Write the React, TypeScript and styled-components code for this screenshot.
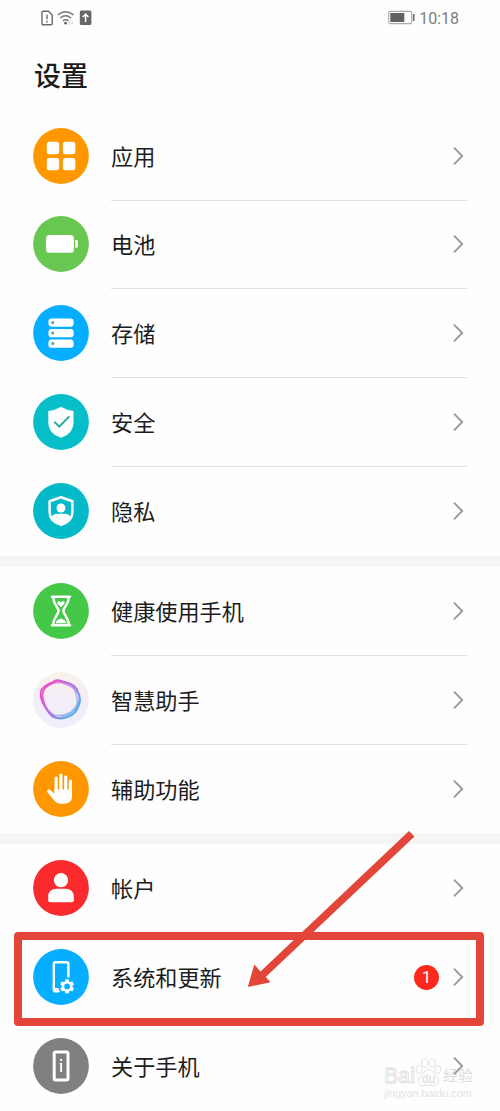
import React from "react";
import styled, { createGlobalStyle } from "styled-components";

const GlobalStyle = createGlobalStyle`
  * { box-sizing: border-box; }
  body {
    margin: 0;
    background: #fefefe;
    font-family: "Noto Sans CJK SC", "Noto Sans", sans-serif;
    color: #1c1c1c;
  }
`;

const Screen = styled.main`
  position: relative;
  display: flex;
  flex-direction: column;
  width: 500px;
  height: 1111px;
  overflow: hidden;
`;

const StatusBar = styled.header`
  display: flex;
  align-items: center;
  justify-content: space-between;
  height: 36px;
  padding: 0 41px;
`;

const StatusGroup = styled.div<{ $gap: number }>`
  display: flex;
  align-items: center;
  gap: ${(p) => p.$gap}px;
`;

const Clock = styled.time`
  font: 400 16px/20px Roboto, sans-serif;
  color: #7c7c7c;
  padding-top: 2px;
`;

const Title = styled.h1`
  margin: 0;
  height: 76.2px;
  padding: 19px 0 0 34px;
  font-size: 27px;
  line-height: 40px;
  font-weight: 500;
`;

const Group = styled.section`
  & + & {
    border-top: 11px solid #f5f5f5;
  }
`;

const Row = styled.div`
  display: flex;
  height: 88.85px;
  padding: 0 33px;
`;

const IconSlot = styled.div`
  display: flex;
  align-items: center;
  width: 78px;
  padding-bottom: 1px;
`;

const RowBody = styled.div<{ $divided: boolean }>`
  flex: 1;
  display: flex;
  align-items: center;
  justify-content: space-between;
  border-bottom: 1px solid ${(p) => (p.$divided ? "#e0e0e0" : "transparent")};
`;

const Label = styled.span`
  font-size: 22.15px;
  line-height: 32px;
  padding-bottom: 2px;
  white-space: nowrap;
`;

const Trailing = styled.div`
  display: flex;
  align-items: center;
  gap: 14px;
  padding-right: 3px;
`;

const Badge = styled.span`
  display: flex;
  align-items: center;
  justify-content: center;
  width: 25px;
  height: 25px;
  border-radius: 50%;
  background: #fb2a1c;
  color: #fff;
  font: 400 17px/25px Roboto, sans-serif;
`;

const Highlight = styled.div`
  position: absolute;
  left: 14px;
  top: 932px;
  width: 470px;
  height: 94px;
  border: 8px solid #e34538;
  border-radius: 4px;
`;

const Pointer = styled.svg`
  position: absolute;
  left: 240px;
  top: 824px;
`;

const Watermark = styled.div`
  position: absolute;
  z-index: -1;
  left: 384px;
  top: 1055px;
  width: 92px;
  color: #fff;
`;

const Brand = styled.div`
  display: flex;
  align-items: flex-end;
  height: 32px;
  font: 400 21.5px/22px "Liberation Sans", sans-serif;
  -webkit-text-stroke: 0.8px #dcdcdc;
`;

const BrandChinese = styled.span`
  font: 400 15px/20px "Noto Sans CJK SC", sans-serif;
  margin: 0 0 2px;
  color: #dcdcdc;
  -webkit-text-stroke: 0;
`;

const Paw = styled.svg`
  margin: 0 1px 0 0;
`;

const Site = styled.div`
  font: 400 10.9px/13px "Liberation Sans", sans-serif;
  color: #e2e2e2;
`;

const Chevron = () => (
  <svg width="11" height="20" viewBox="0 0 11 20" fill="none" stroke="#9a9a9a" strokeWidth="1.9">
    <path d="M1 1.6 9.2 10 1 18.4" />
  </svg>
);

const Disc = ({ color, children }: { color: string; children: React.ReactNode }) => (
  <svg width="56" height="56" viewBox="0 0 56 56">
    <circle cx="28" cy="28" r="27.9" fill={color} />
    {children}
  </svg>
);

const Apps = () => (
  <Disc color="#ff9800">
    <g fill="#fff">
      {[13.8, 29.9].map((x) =>
        [13.8, 29.9].map((y) => <rect key={`${x}-${y}`} x={x} y={y} width="12.4" height="12.4" rx="2.5" />)
      )}
    </g>
  </Disc>
);

const Battery = () => (
  <Disc color="#68c751">
    <rect x="13" y="19" width="28" height="17.7" rx="3.5" fill="#fff" />
    <path d="M42.2 24h1.3q1.3 0 1.3 1.3v5.2q0 1.3-1.3 1.3H42.2z" fill="#fff" />
  </Disc>
);

const Storage = () => (
  <Disc color="#05aeff">
    {[13.4, 24, 34.5].map((y) => (
      <g key={y}>
        <rect x="15.4" y={y} width="25.3" height="8.3" rx="3.4" fill="#fff" />
        <circle cx="19.8" cy={y + 4.1} r="1.5" fill="#4a9fc0" />
      </g>
    ))}
  </Disc>
);

const Security = () => (
  <Disc color="#05bec8">
    <path d="M28 12.7Q34 16.3 40.5 17V28Q40.5 39.5 28 43.7 15.3 39.5 15.3 28V17Q22 16.3 28 12.7Z" fill="#fff" />
    <path d="M21.3 27.8 26.2 32.6 36.3 22.4" fill="none" stroke="#26aa9c" strokeWidth="2" />
  </Disc>
);

const Privacy = () => (
  <Disc color="#05bac8">
    <path d="M28 14.3 39.4 18.2V29Q39.4 38.2 28 41.8 16.6 38.2 16.6 29V18.2Z" fill="none" stroke="#fff" strokeWidth="2.5" strokeLinejoin="round" />
    <circle cx="28" cy="25" r="4.5" fill="#fff" />
    <path d="M18.5 34.2Q20 30.9 24 30.7H32Q36 30.9 37.5 34.2 34 40 28 42 22 40 18.5 34.2Z" fill="#fff" />
  </Disc>
);

const Hourglass = () => (
  <Disc color="#45c747">
    <path d="M20.3 14.5C20.3 22 25.6 24.2 25.6 28S20.3 34 20.3 41.5M35.7 14.5C35.7 22 30.4 24.2 30.4 28S35.7 34 35.7 41.5M19 13.8H37M19 42.2H37" fill="none" stroke="#fff" strokeWidth="2.5" strokeLinecap="round" />
    <path d="M28 24.2 24.5 20.7Q23.7 18.5 25.4 18.2 27.2 18 28 19.4 28.8 18 30.6 18.2 32.3 18.5 31.5 20.7Z" fill="#fff" />
    <path d="M22.7 40.3Q23.2 37 25.8 36.8 28 34 30.2 36.8 32.8 37 33.3 40.3Z" fill="#fff" />
  </Disc>
);

const Assistant = () => (
  <svg width="56" height="56" viewBox="0 0 56 56">
    <defs>
      <linearGradient id="haloFill" x1="0" y1="0" x2="0" y2="1">
        <stop offset="0" stopColor="#f8f2ec" />
        <stop offset="0.5" stopColor="#f4ecf6" />
        <stop offset="1" stopColor="#eef0fc" />
      </linearGradient>
      <linearGradient id="ringStroke" gradientUnits="userSpaceOnUse" x1="12" y1="16" x2="43" y2="42">
        <stop offset="0" stopColor="#ed47c5" />
        <stop offset="0.5" stopColor="#a56ee8" />
        <stop offset="1" stopColor="#49b5e8" />
      </linearGradient>
    </defs>
    <circle cx="28" cy="28" r="28" fill="url(#haloFill)" />
    <g fill="none" stroke="url(#ringStroke)" strokeWidth="1.7" strokeLinejoin="round">
      <path d="M22 8.6C26 7 29 9.5 34 10.5 40 12 43 14 44.5 19 47 24 48.5 28 46 33 44.5 38 41 43 35 45 30 47 24 47 20 44 16 42 14 38 11 33 8.5 29 6.5 25 8 19 10 13 17 12 22 8.6Z" />
      <path d="M21 10.5C26 7.5 31 10.5 35 11.5 41 14 43.5 17 46 23 48 29 44 34 42 38 38 43 32 45 26 46 20 47 17 43 14 38 11 34 11 29 9.5 24 9 16 15 14 21 10.5Z" opacity=".75" />
      <path d="M19 11.5C25 9 32 11.5 37 14 42 16 43 21 44 26 46 31 43 36 38 40 33 43 27 44.5 21 43 16 40 13 36 11 31 8 27 9 21 11 17 13 13 15 13 19 11.5Z" opacity=".6" />
    </g>
  </svg>
);

const Hand = () => (
  <Disc color="#ff9800">
    <g stroke="#fff" strokeWidth="3.2" strokeLinecap="round">
      <path d="M23.1 17V32M27.9 14V32M32.7 15.8V32M37.4 20V34" />
    </g>
    <path d="M21.5 28.5H39V36Q38.5 42.8 31 42.8H28Q23.5 42.8 20.5 38.5L14.4 31.2Q13.4 29.6 15 28.7 16.3 28.2 17.5 29.2L21.5 32.8Z" fill="#fff" />
  </Disc>
);

const Account = () => (
  <Disc color="#fa2a2d">
    <circle cx="28" cy="20.2" r="7.1" fill="#fff" />
    <path d="M23 28.8H33Q40.8 29.2 40.8 37V40.2Q40.8 42.3 38.7 42.3H17.3Q15.2 42.3 15.2 40.2V37Q15.2 29.2 23 28.8Z" fill="#fff" />
  </Disc>
);

const SystemUpdate = () => (
  <Disc color="#05aeff">
    <path d="M26 42.4H22.5Q20.8 42.4 20.8 40.7V15Q20.8 13.3 22.5 13.3H33.7Q35.4 13.3 35.4 15V28.5" fill="none" stroke="#fff" strokeWidth="2.4" />
    <path d="M22 39H25.3L27 43H22Z" fill="#fff" />
    <g transform="translate(34.1 37.4)">
      <g stroke="#fff" strokeWidth="3.8">
        {[0, 60, 120].map((a) => (
          <path key={a} d="M0-7V7" transform={`rotate(${a})`} />
        ))}
      </g>
      <circle r="5.5" fill="#fff" />
      <circle r="2.9" fill="#05aeff" />
    </g>
  </Disc>
);

const About = () => (
  <Disc color="#808080">
    <rect x="21.2" y="14.1" width="13.8" height="27.8" rx="1.4" fill="none" stroke="#fff" strokeWidth="3" />
    <path d="M28.1 21V23M28.1 25V33.4" fill="none" stroke="#fff" strokeWidth="1.8" />
    <path d="M26.6 25.5H28.1M26.8 33H29.4" fill="none" stroke="#fff" strokeWidth=".9" />
  </Disc>
);

type Item = { label: string; icon: React.ReactNode; badge?: number };

const groups: Item[][] = [
  [
    { label: "应用", icon: <Apps /> },
    { label: "电池", icon: <Battery /> },
    { label: "存储", icon: <Storage /> },
    { label: "安全", icon: <Security /> },
    { label: "隐私", icon: <Privacy /> },
  ],
  [
    { label: "健康使用手机", icon: <Hourglass /> },
    { label: "智慧助手", icon: <Assistant /> },
    { label: "辅助功能", icon: <Hand /> },
  ],
  [
    { label: "帐户", icon: <Account /> },
    { label: "系统和更新", icon: <SystemUpdate />, badge: 1 },
    { label: "关于手机", icon: <About /> },
  ],
];

export default function App() {
  return (
    <>
      <GlobalStyle />
      <Screen>
        <StatusBar>
          <StatusGroup $gap={4}>
            <svg width="12" height="16" viewBox="0 0 12 16" fill="none" stroke="#6b6b6b" strokeWidth="1.4">
              <path d="M2.2 1.2H7.5L11.2 5V13.5Q11.2 14.7 10 14.7H2.2Q1 14.7 1 13.5V2.4Q1 1.2 2.2 1.2Z" />
              <path d="M6 4.8V9.2M6 10.8V12.4" />
            </svg>
            <svg width="18" height="16" viewBox="0 0 18 16" fill="none" stroke="#777" strokeWidth="1.5">
              <path d="M.8 5Q8.6-1.5 16.6 5M3.3 8Q8.6 3.6 14 8M5.9 10.8Q8.6 8.7 11.4 10.8" />
              <circle cx="8.6" cy="13.2" r="1.4" fill="#666" stroke="none" />
              <path d="M12.4 11.4V14.5M15.2 11.4V14.5" stroke="#d2d2d2" strokeWidth="1.2" />
            </svg>
            <svg width="13" height="16" viewBox="0 0 13 16">
              <rect x=".8" y=".5" width="11.6" height="14.6" rx="1.5" fill="#666" />
              <path d="M6.6 12V4.5M3.8 7 6.6 4 9.4 7" fill="none" stroke="#fff" strokeWidth="1.5" />
            </svg>
          </StatusGroup>
          <StatusGroup $gap={4}>
            <svg width="28" height="15" viewBox="0 0 28 15">
              <rect x="1.7" y="1.4" width="23" height="12.2" rx="1.5" fill="#fff" stroke="#aaa" strokeWidth="1.1" />
              <rect x="3.3" y="3" width="14" height="9" fill="#626262" />
              <rect x="25.8" y="4" width="1.8" height="7" rx=".6" fill="#777" />
            </svg>
            <Clock>10:18</Clock>
          </StatusGroup>
        </StatusBar>
        <Title>设置</Title>
        {groups.map((items, g) => (
          <Group key={g}>
            {items.map((item, i) => (
              <Row key={item.label}>
                <IconSlot>{item.icon}</IconSlot>
                <RowBody $divided={i < items.length - 1}>
                  <Label>{item.label}</Label>
                  <Trailing>
                    {item.badge && <Badge>{item.badge}</Badge>}
                    <Chevron />
                  </Trailing>
                </RowBody>
              </Row>
            ))}
          </Group>
        ))}
        <Highlight />
        <Pointer width="180" height="170" viewBox="240 824 180 170">
          <path d="M409 831 414.5 836.5 265.7 977 270.5 982.3 247.8 987 254.3 964.5 260.5 971.5Z" fill="#e34538" />
        </Pointer>
        <Watermark>
          <Brand>
            <span>Bai</span>
            <Paw width="27" height="30" viewBox="0 0 27 30" fill="#fff" stroke="#dcdcdc" strokeWidth=".9">
              <ellipse cx="4.3" cy="12.5" rx="3" ry="4" />
              <ellipse cx="9.8" cy="6" rx="3" ry="4.2" />
              <ellipse cx="17.3" cy="6" rx="3" ry="4.2" />
              <ellipse cx="22.8" cy="12.5" rx="3" ry="4" />
              <path d="M13.5 12.5C18 12.5 18 17 22 20 26 25 22 29 18 28.5Q13.5 27.5 9 28.5C5 29 1 25 5 20 9 17 9 12.5 13.5 12.5Z" />
              <text x="6.8" y="26" fontSize="12" strokeWidth=".6">du</text>
            </Paw>
            <BrandChinese>经验</BrandChinese>
          </Brand>
          <Site>jingyan.baidu.com</Site>
        </Watermark>
      </Screen>
    </>
  );
}
